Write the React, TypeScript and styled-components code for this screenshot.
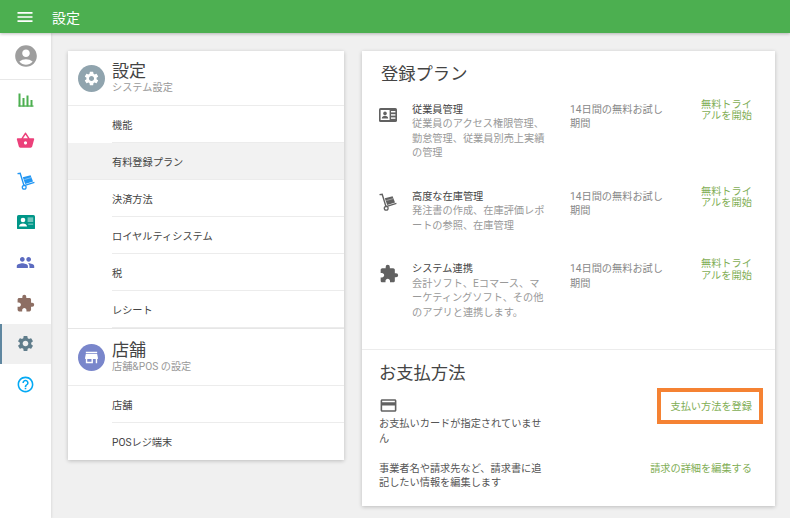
import React from 'react';
import styled, { createGlobalStyle } from 'styled-components';
import {
  MdAccountCircle,
  MdCreditCard,
  MdExtension,
  MdHelpOutline,
  MdMenu,
  MdPeople,
  MdSettings,
  MdShoppingBasket,
  MdStore,
} from 'react-icons/md';

const GlobalStyle = createGlobalStyle`
  html, body {
    margin: 0;
    padding: 0;
    height: 100%;
    overflow: hidden;
    background: #f0f0f0;
    font-family: Roboto, "Noto Sans CJK JP", sans-serif;
  }
  *, *::before, *::after {
    box-sizing: border-box;
  }
`;

const Page = styled.div`
  width: 790px;
  height: 518px;
  display: flex;
  flex-direction: column;
  overflow: hidden;
`;

const TopBar = styled.header`
  height: 33px;
  flex: none;
  display: flex;
  align-items: center;
  gap: 17px;
  padding-left: 15px;
  background: #4caf50;
  color: #fff;
  font-size: 14px;
  box-shadow: 0 1px 3px rgba(0, 0, 0, 0.25);
  position: relative;
  z-index: 2;
`;

const Body = styled.div`
  flex: 1;
  display: flex;
  min-height: 0;
`;

const SideNav = styled.nav`
  width: 51px;
  flex: none;
  background: #fff;
  box-shadow: 1px 0 2px rgba(0, 0, 0, 0.08);
`;

const ProfileSlot = styled.div`
  height: 47px;
  display: flex;
  align-items: center;
  justify-content: center;
  color: #9e9e9e;
  border-bottom: 1px solid #e8e8e8;
`;

const NavItem = styled.div<{ $color: string; $active?: boolean }>`
  height: 40.6px;
  display: flex;
  align-items: center;
  justify-content: center;
  color: ${({ $color }) => $color};
  background: ${({ $active }) => ($active ? '#f0f0f0' : 'transparent')};
  border-left: 2px solid ${({ $active }) => ($active ? '#5f87a0' : 'transparent')};
  padding-right: 2px;
`;

const Content = styled.main`
  flex: 1;
  display: flex;
  align-items: flex-start;
  gap: 18px;
  padding: 18px 15px 0 17px;
`;

const Card = styled.section<{ $width: number }>`
  width: ${({ $width }) => $width}px;
  flex: none;
  background: #fff;
  box-shadow: 0 1px 4px rgba(0, 0, 0, 0.22);
`;

const GroupHead = styled.div<{ $height: number; $ruled?: boolean }>`
  height: ${({ $height }) => $height}px;
  display: flex;
  align-items: center;
  gap: 7px;
  padding-left: 10px;
  border-top: ${({ $ruled }) => ($ruled ? '1px solid #e6e6e6' : 'none')};
  border-bottom: 1px solid #ececec;
`;

const GroupBadge = styled.div<{ $color: string }>`
  width: 27px;
  height: 27px;
  flex: none;
  border-radius: 50%;
  display: flex;
  align-items: center;
  justify-content: center;
  background: ${({ $color }) => $color};
  color: #fff;
`;

const GroupTitle = styled.div`
  font-size: 17px;
  line-height: 19px;
  color: #444;
`;

const GroupSub = styled.div`
  font-size: 10.2px;
  line-height: 13px;
  color: #999;
`;

const MenuItem = styled.div<{ $active?: boolean }>`
  height: 37px;
  display: flex;
  align-items: center;
  font-size: 10.2px;
  color: #444;
  padding-left: 44px;
  padding-bottom: 1px;
  background: ${({ $active }) => ($active ? '#f2f2f2' : 'transparent')};
  position: relative;

  &:not(:last-child)::after {
    content: '';
    position: absolute;
    left: ${({ $active }) => ($active ? '0' : '44px')};
    right: 0;
    bottom: 0;
    height: 1px;
    background: #ececec;
  }
`;

const SectionTitle = styled.h2`
  margin: 0;
  font-size: 17.3px;
  line-height: 24px;
  font-weight: 400;
  color: #444;
`;

const PlanSection = styled.div`
  padding: 11px 0 0 17px;
  border-bottom: 1px solid #ececec;
`;

const PlanHeading = styled(SectionTitle)`
  padding-left: 2px;
  margin-bottom: 16.7px;
`;

const PlanRow = styled.div`
  display: grid;
  grid-template-columns: 33px 158px 131px 52px;
  padding-bottom: 28.6px;
`;

const PlanIcon = styled.div`
  height: 24px;
  display: flex;
  align-items: center;
  justify-content: flex-start;
  color: #616161;
`;

const PlanName = styled.div`
  font-size: 10.2px;
  line-height: 14.6px;
  color: #444;
`;

const PlanDesc = styled.div`
  width: 134px;
  font-size: 10.2px;
  line-height: 14.6px;
  color: #999;
`;

const TrialText = styled.div`
  width: 100px;
  font-size: 10.2px;
  line-height: 14.6px;
  color: #888;
`;

const TrialLink = styled.a`
  font-size: 10.2px;
  line-height: 11.8px;
  margin-top: -4px;
  color: #7fae55;
`;

const PaySection = styled.div`
  padding: 11px 23px 15px 17px;
`;

const PayRow = styled.div`
  display: flex;
  justify-content: space-between;
  align-items: flex-start;
`;

const PayText = styled.div`
  width: 165px;
  font-size: 10.2px;
  line-height: 14.8px;
  color: #555;
`;

const CardGlyph = styled.div`
  height: 18px;
  margin: 11px 0 3px;
  display: flex;
  align-items: center;
  color: #616161;
`;

const BillingRow = styled(PayRow)`
  margin-top: 15px;
`;

const PayLink = styled.a`
  font-size: 10.2px;
  line-height: 14.6px;
  color: #7fae55;
`;

const RegisterLink = styled(PayLink)`
  position: relative;
  margin-top: 15px;

  /* 注釈の枠 */
  &::after {
    content: '';
    position: absolute;
    left: -14px;
    right: -11px;
    top: -12px;
    height: 36px;
    border: 4px solid #f58233;
  }
`;

const TextCol = styled.div``;

function BarsIcon() {
  return (
    <svg width="16" height="14" viewBox="0 0 16 14" fill="#4caf50">
      <rect x="0.5" y="0.5" width="2" height="13" />
      <rect x="4.5" y="5" width="2" height="8.5" />
      <rect x="8.5" y="2.5" width="2" height="11" />
      <rect x="12.5" y="7" width="2" height="6.5" />
      <rect x="0.5" y="12.4" width="15" height="1.3" />
    </svg>
  );
}

// 右側メニューの従業員アイコン(白地に人物)
function ContactIcon({ size, fill }: { size: number; fill: string }) {
  return (
    <svg width={size} height={(size * 14) / 18} viewBox="0 0 18 14">
      <rect x="0" y="0" width="18" height="14" rx="1.6" fill={fill} />
      <rect x="1.6" y="2" width="9" height="10" fill="#fff" />
      <circle cx="6" cy="5.4" r="1.8" fill={fill} />
      <path d="M2.8 10.6c0-1.9 1.6-2.8 3.2-2.8s3.2.9 3.2 2.8z" fill={fill} />
      <rect x="12" y="3" width="4.4" height="1.4" fill="#fff" />
      <rect x="12" y="6.2" width="4.4" height="1.4" fill="#fff" />
      <rect x="12" y="9.4" width="4.4" height="1.4" fill="#fff" />
    </svg>
  );
}

// サイドバー用(塗りつぶしに白い人物)
function StaffBadgeIcon({ fill }: { fill: string }) {
  return (
    <svg width="18" height="14.5" viewBox="0 0 18 14.5">
      <rect x="0" y="0" width="18" height="14.5" rx="1.6" fill={fill} />
      <circle cx="6" cy="5" r="2.3" fill="#fff" />
      <path d="M2 11.6c0-2 2-3 4-3s4 1 4 3z" fill="#fff" />
      <rect x="10.6" y="2.4" width="5.6" height="4.6" fill="#fff" opacity="0.45" />
      <rect x="11.2" y="8.6" width="5" height="1.2" fill="#fff" opacity="0.45" />
    </svg>
  );
}

function DollyIcon({ size, color }: { size: number; color: string }) {
  return (
    <svg width={size} height={size} viewBox="0 0 18 18" fill="none">
      <path d="M0.5 1.6 L3.2 1.2 L7 13.6 L17.4 10.4" stroke={color} strokeWidth="1.4" />
      <circle cx="7.2" cy="15.2" r="1.9" stroke={color} strokeWidth="1.3" />
      <path d="M5.8 5.2 L13.6 3.2 L16 9.6 L8.2 11.9 Z" fill={color} />
      <path d="M7.4 7.5 L14.2 5.6" stroke="#fff" strokeWidth="0.6" opacity="0.7" />
    </svg>
  );
}

const plans = [
  {
    name: '従業員管理',
    desc: '従業員のアクセス権限管理、勤怠管理、従業員別売上実績の管理',
    icon: <ContactIcon size={18} fill="#616161" />,
  },
  {
    name: '高度な在庫管理',
    desc: '発注書の作成、在庫評価レポートの参照、在庫管理',
    icon: <DollyIcon size={18} color="#616161" />,
  },
  {
    name: 'システム連携',
    desc: '会計ソフト、Eコマース、マーケティングソフト、その他のアプリと連携します。',
    icon: <MdExtension size={20} />,
  },
];

const settingsMenu = ['機能', '有料登録プラン', '決済方法', 'ロイヤルティシステム', '税', 'レシート'];
const storeMenu = ['店舗', 'POSレジ端末'];

export default function App() {
  return (
    <Page lang="ja">
      <GlobalStyle />
      <TopBar>
        <MdMenu size={20} />
        <span>設定</span>
      </TopBar>
      <Body>
        <SideNav>
          <ProfileSlot>
            <MdAccountCircle size={26} />
          </ProfileSlot>
          <NavItem $color="#4caf50">
            <BarsIcon />
          </NavItem>
          <NavItem $color="#ec407a">
            <MdShoppingBasket size={19} />
          </NavItem>
          <NavItem $color="#2196f3">
            <DollyIcon size={18} color="#2196f3" />
          </NavItem>
          <NavItem $color="#009688">
            <StaffBadgeIcon fill="#009688" />
          </NavItem>
          <NavItem $color="#5c6bc0">
            <MdPeople size={19} />
          </NavItem>
          <NavItem $color="#8d6e63">
            <MdExtension size={19} />
          </NavItem>
          <NavItem $color="#607d8b" $active>
            <MdSettings size={19} />
          </NavItem>
          <NavItem $color="#03a9f4">
            <MdHelpOutline size={19} />
          </NavItem>
        </SideNav>
        <Content>
          <Card $width={276}>
            <GroupHead $height={55}>
              <GroupBadge $color="#90a4ae">
                <MdSettings size={17} />
              </GroupBadge>
              <TextCol>
                <GroupTitle>設定</GroupTitle>
                <GroupSub>システム設定</GroupSub>
              </TextCol>
            </GroupHead>
            {settingsMenu.map((item) => (
              <MenuItem key={item} $active={item === '有料登録プラン'}>
                {item}
              </MenuItem>
            ))}
            <GroupHead $height={58} $ruled>
              <GroupBadge $color="#7986cb">
                <MdStore size={17} />
              </GroupBadge>
              <TextCol>
                <GroupTitle>店舗</GroupTitle>
                <GroupSub>店舗&amp;POS の設定</GroupSub>
              </TextCol>
            </GroupHead>
            {storeMenu.map((item) => (
              <MenuItem key={item}>{item}</MenuItem>
            ))}
          </Card>
          <Card $width={413}>
            <PlanSection>
              <PlanHeading>登録プラン</PlanHeading>
              {plans.map((plan) => (
                <PlanRow key={plan.name}>
                  <PlanIcon>{plan.icon}</PlanIcon>
                  <TextCol>
                    <PlanName>{plan.name}</PlanName>
                    <PlanDesc>{plan.desc}</PlanDesc>
                  </TextCol>
                  <TrialText>14日間の無料お試し期間</TrialText>
                  <TrialLink>無料トライアルを開始</TrialLink>
                </PlanRow>
              ))}
            </PlanSection>
            <PaySection>
              <SectionTitle>お支払方法</SectionTitle>
              <PayRow>
                <TextCol>
                  <CardGlyph>
                    <MdCreditCard size={19} />
                  </CardGlyph>
                  <PayText>お支払いカードが指定されていません</PayText>
                </TextCol>
                <RegisterLink>支払い方法を登録</RegisterLink>
              </PayRow>
              <BillingRow>
                <PayText>事業者名や請求先など、請求書に追記したい情報を編集します</PayText>
                <PayLink>請求の詳細を編集する</PayLink>
              </BillingRow>
            </PaySection>
          </Card>
        </Content>
      </Body>
    </Page>
  );
}
